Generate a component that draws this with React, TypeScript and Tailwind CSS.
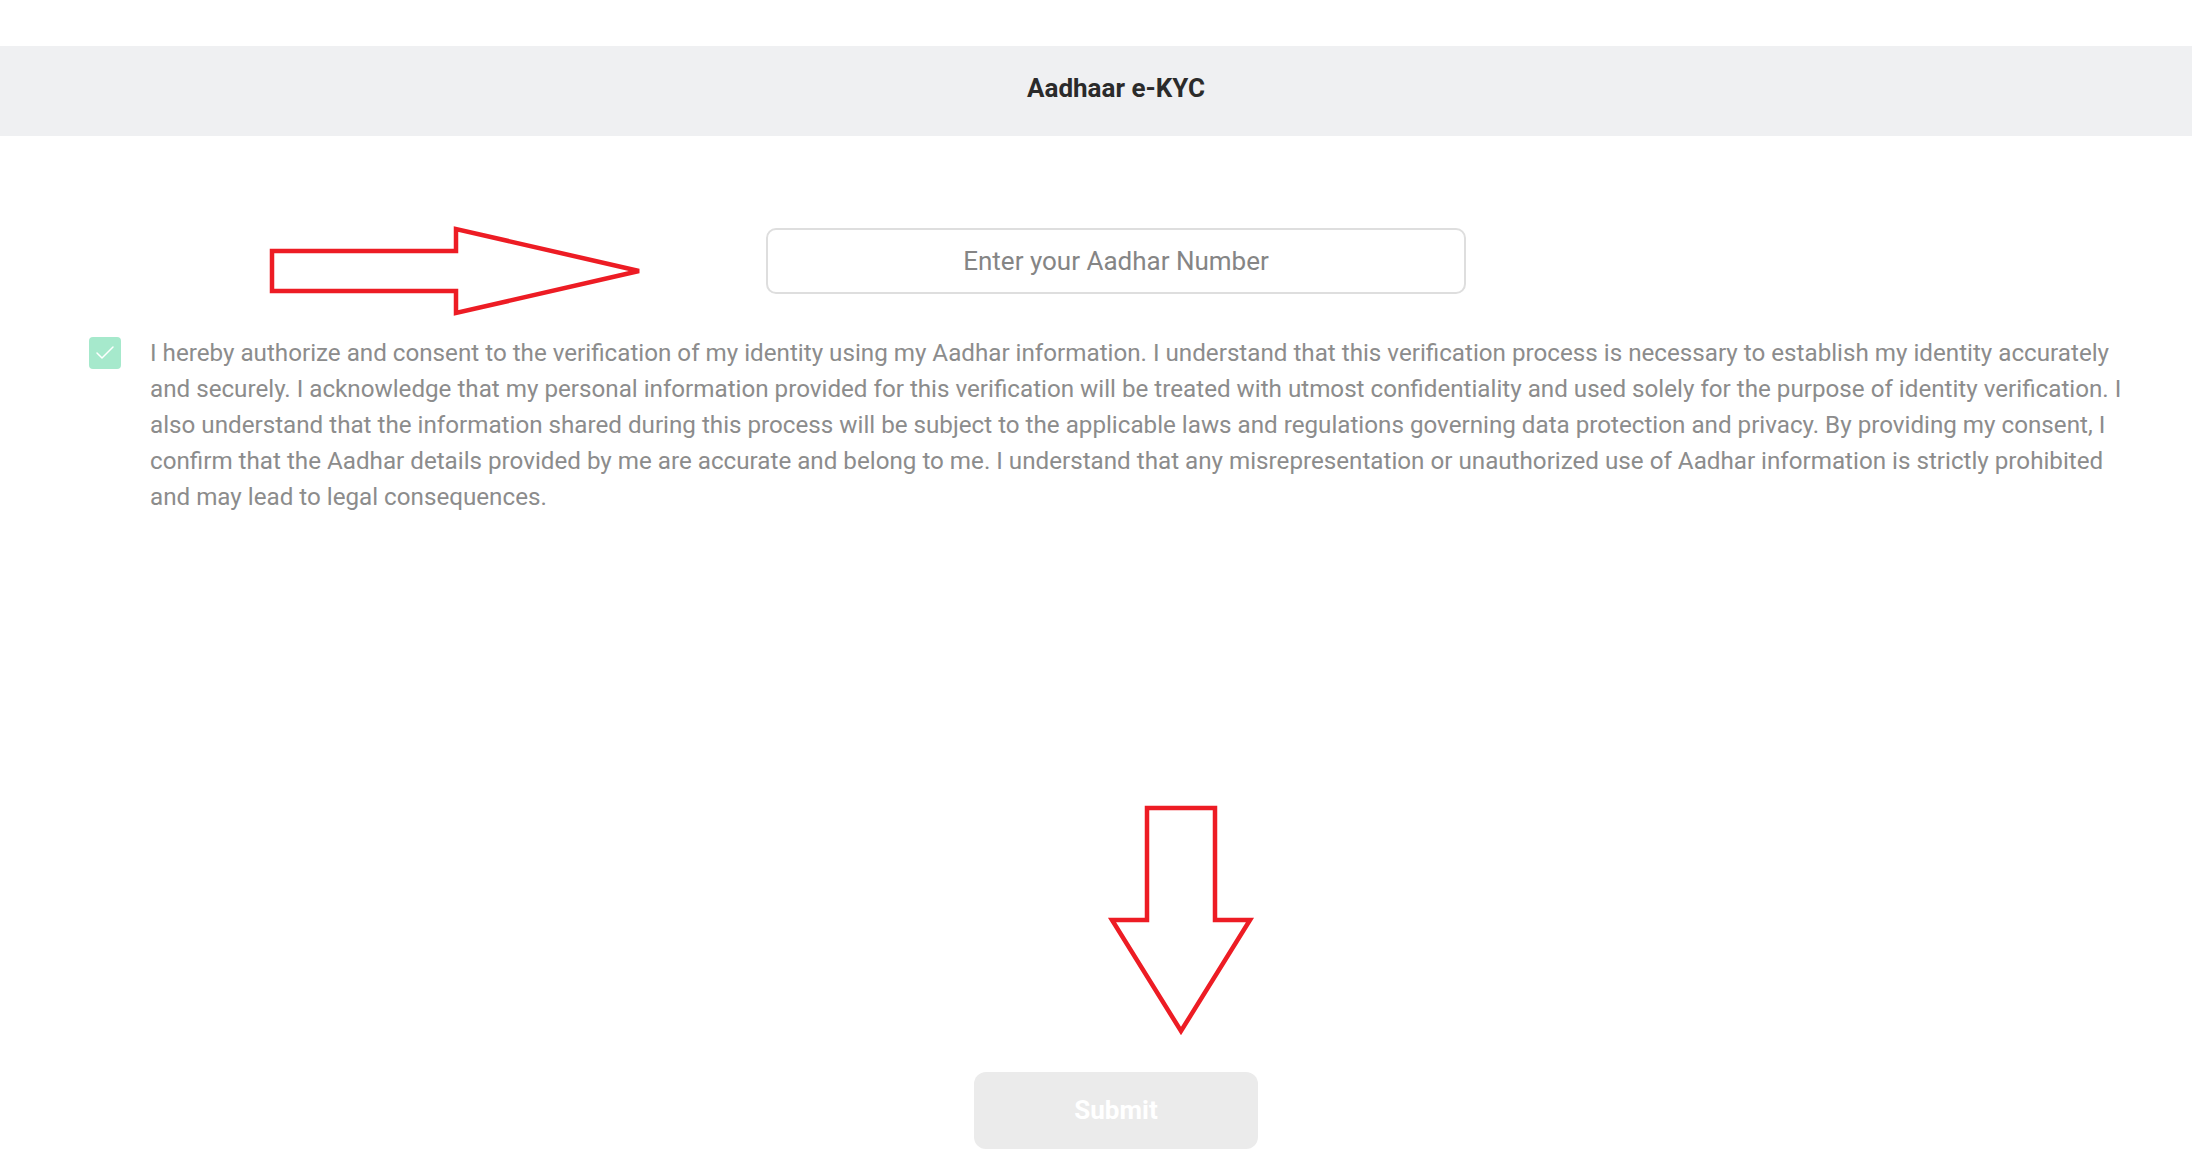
import React from "react";
import { Check } from "lucide-react";

export default function App() {
  return (
    <div className="relative min-h-screen w-full bg-white font-['Roboto',sans-serif]">
      <div className="pt-[46px]">
        <header className="flex h-[90px] items-center justify-center bg-[#eff0f2] pb-[6px] pl-[40px]">
          <h1 className="text-[26px] font-bold leading-none text-[#2b2b2b]">Aadhaar e-KYC</h1>
        </header>

        <div className="mt-[92px] flex justify-center pl-[40px]">
          <input
            type="text"
            placeholder="Enter your Aadhar Number"
            className="h-[66px] w-[700px] rounded-[10px] border-2 border-[#dedede] bg-white text-center text-[26px] text-[#333] outline-none placeholder:text-[#858585]"
          />
        </div>

        <div className="mt-[41px] flex items-start pl-[89px] pr-[60px]">
          <div className="mt-[2px] flex h-[32px] w-[32px] shrink-0 items-center justify-center rounded-[4px] bg-[#a6e9cc]">
            <Check className="h-[24px] w-[24px] text-white" strokeWidth={1.5} />
          </div>
          <p className="ml-[29px] flex-1 text-[24.2px] leading-[36px] text-[#8c8c8c]">
            I hereby authorize and consent to the verification of my identity using my Aadhar information. I understand that this verification process is necessary to establish my identity accurately and securely. I acknowledge that my personal information provided for this verification will be treated with utmost confidentiality and used solely for the purpose of identity verification. I also understand that the information shared during this process will be subject to the applicable laws and regulations governing data protection and privacy. By providing my consent, I confirm that the Aadhar details provided by me are accurate and belong to me. I understand that any misrepresentation or unauthorized use of Aadhar information is strictly prohibited and may lead to legal consequences.
          </p>
        </div>

        <div className="mt-[557px] flex justify-center pl-[40px]">
          <button
            type="button"
            className="h-[77px] w-[284px] rounded-[12px] bg-[#ebebeb] text-[26px] font-bold text-white"
          >
            Submit
          </button>
        </div>
      </div>

      <svg
        className="pointer-events-none absolute left-0 top-0"
        width="2192"
        height="1171"
        viewBox="0 0 2192 1171"
      >
        <polygon
          points="272,251 456,251 456,229 639,271 456,313 456,291 272,291"
          fill="none"
          stroke="#ed1c24"
          strokeWidth="4.5"
          strokeLinejoin="miter"
        />
        <polygon
          points="1147,808 1215,808 1215,920 1250,920 1181,1031 1112,920 1147,920"
          fill="none"
          stroke="#ed1c24"
          strokeWidth="4.5"
          strokeLinejoin="miter"
        />
      </svg>
    </div>
  );
}
